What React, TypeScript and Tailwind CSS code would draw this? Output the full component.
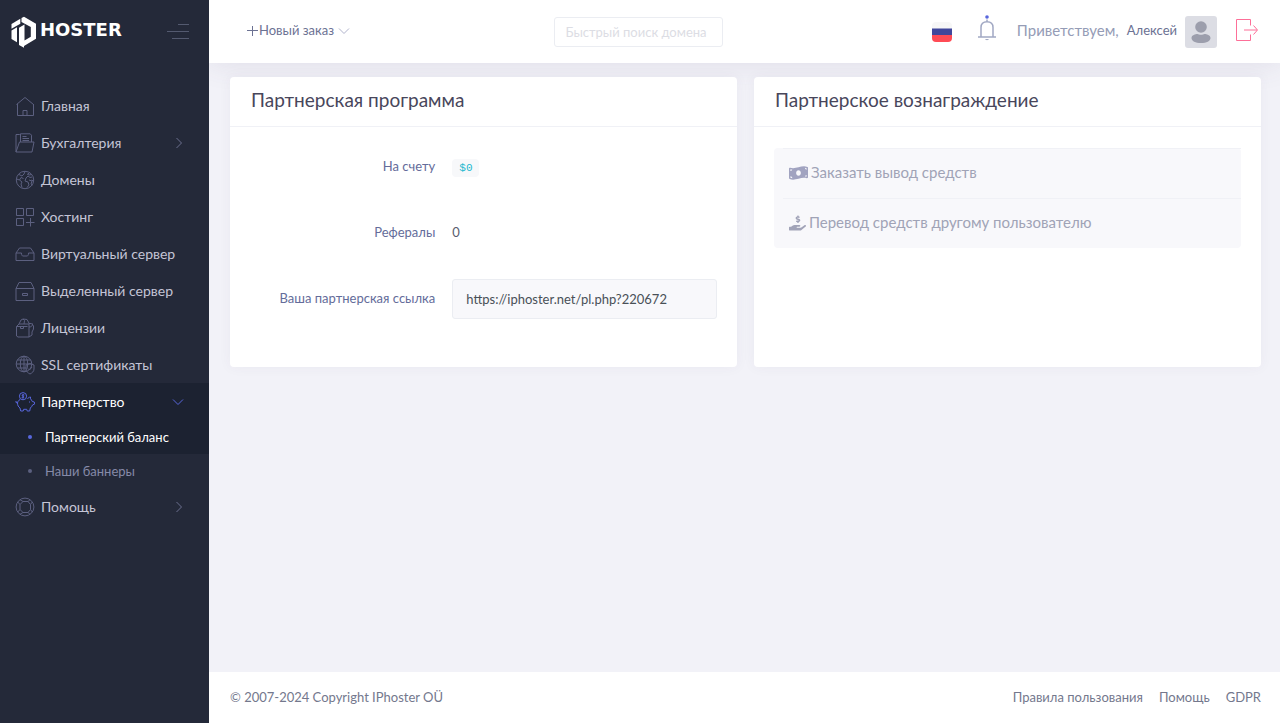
import type { ReactNode } from "react";
import clsx from "clsx";
import { FaHandHoldingUsd, FaMoneyBillWave } from "react-icons/fa";

type IconProps = { children: ReactNode; className?: string };

function LineIcon({ children, className }: IconProps) {
  return (
    <svg
      viewBox="0 0 20 20"
      className={clsx("h-5 w-5 shrink-0", className)}
      fill="none"
      stroke="currentColor"
      strokeWidth="1"
      strokeLinejoin="round"
      aria-hidden="true"
    >
      {children}
    </svg>
  );
}

const icons = {
  home: (
    <>
      <path d="M1.500 8.500 10 1.500l8.500 7" />
      <path d="M2.500 8v11.500h16V8" />
      <path d="M8 19.500v-5h4v5" />
    </>
  ),
  folder: (
    <>
      <path d="M1 19V1.500h3.500L6 3" />
      <path d="M5.500 9V.8h9.700l1.300 1.400V9" />
      <path d="M7.500 3.500h4M7.500 5.500h6.500M7.500 7.500h6.500" />
      <path d="M1 19 4.500 9h14.500l-2 10z" />
    </>
  ),
  globe: (
    <>
      <circle cx="10" cy="10" r="8.700" />
      <path d="M4 4.500 7 6l2-2 1-2.500M1.500 9l3 1 2.500 2-1 2 1 3.500M4.500 10 6 7.500l2.500 1" />
      <path d="m12 4 2 1 2.500-.5M11 8l2-2 2 1.500 2-.5M11 8l-1 3 3 1 1 3-2 2.500M14 10l3 1-1 3 1.500 1M14.500 2.500 13 4M18.500 11l-2-1" />
    </>
  ),
  grid: (
    <>
      <path d="M1.500 1.500h7v7h-7zM11.500 1.500h7v7h-7zM1.500 11.500h7v7h-7z" />
      <path d="M15.500 11v8.500M11 15.500h8.500" />
    </>
  ),
  tray: (
    <>
      <path d="M1 9 4.500 4h11L19 9v7.500H1z" />
      <path d="M1 9h5.500c0 2 .5 3 1.500 3h4c1 0 1.500-1 1.500-3H19" />
    </>
  ),
  drawer: (
    <>
      <path d="M1 7.500 4 1.500h12l3 6v12H1z" />
      <path d="M1 7.500h18M7.500 12.500h5v2h-5z" />
    </>
  ),
  license: (
    <>
      <path d="M1.500 8.500 4 6h10v13H3l-1.500-1z" />
      <path d="M1.500 8.500h11M4 6l2-4 2-1 1.500 1.500L9 6M8 1l4 .5L14.500 6" />
      <path d="M14 5.500h2.500L18.500 8v3L17 14v3l-3 2M14 9c2 0 4-1 3.500-3.500" />
      <path d="M5.500 8.500v2h3v-2" />
    </>
  ),
  ssl: (
    <>
      <circle cx="9" cy="9" r="7.800" />
      <ellipse cx="9" cy="9" rx="3.700" ry="7.800" />
      <path d="M9 1.200v15.600M1.200 9h16M2.300 5h13.400M2.300 13H11" />
      <path d="m15 8.500 4 1.500v4c0 2.500-2 4-4 5-2-1-4-2.500-4-5v-4z" />
      <path d="m13 13.500 1.500 1.500 2.500-3" />
    </>
  ),
  piggy: (
    <>
      <circle cx="8" cy="4.200" r="3.600" />
      <path d="M9.300 3c-2.300-.8-2.800 1-1.300 1.300s1.200 1.800-1.300 1.200M8 2v4.700" />
      <path d="M5 7.500c-1.500 1-2.300 2-2.500 3.500L1 10.500V9M2.500 11c0 2.500 1 4 2.500 5l.7 3h2.500l.5-1.700h3l.5 1.700h2.500l.6-3c1-.7 1.700-1.700 2.200-3l2.200-1-.4-2-2-.5c-.5-1-1-2-1.800-2.700V5c-1.500.2-2.500.8-3 2" />
      <path d="M14.500 9.500v1" />
    </>
  ),
  lifebuoy: (
    <>
      <circle cx="10" cy="10" r="8.900" />
      <path d="M8 4.500h5l2.500 3v5l-2.500 3H8l-3-3v-5z" />
      <path d="m5 2.700 3 1.800M2.700 5 5 7.500M15 2.700l-2 1.800M17.300 5l-1.800 2.500M5 17.300l3-1.800M2.700 15 5 12.500M15 17.300l-2-1.800M17.300 15l-1.800-2.500" />
    </>
  ),
};

const menu: { label: string; icon: ReactNode; arrow?: boolean }[] = [
  { label: "Главная", icon: icons.home },
  { label: "Бухгалтерия", icon: icons.folder, arrow: true },
  { label: "Домены", icon: icons.globe },
  { label: "Хостинг", icon: icons.grid },
  { label: "Виртуальный сервер", icon: icons.tray },
  { label: "Выделенный сервер", icon: icons.drawer },
  { label: "Лицензии", icon: icons.license },
  { label: "SSL сертификаты", icon: icons.ssl },
];

function Chevron({ className }: { className?: string }) {
  return (
    <svg viewBox="0 0 12 12" className={clsx("h-3 w-3 shrink-0", className)} fill="none" stroke="currentColor" aria-hidden="true">
      <path d="m3.500 1 5 5-5 5" />
    </svg>
  );
}

function Logo() {
  return (
    <a href="#" className="flex items-center gap-[3px] text-white">
      <svg viewBox="0 0 26 32" className="h-8 w-[26px]" fill="currentColor" role="img" aria-label="IP">
        <path d="M.5 8 9.300 2.800V7.700L.5 12.700z" />
        <path d="M.5 14.500 6 11.300V26.300L.5 23z" />
        <path d="M10.500 2.100 13 .7l12 7v15L13 29.900v1.800L8 29V11.800l5.500-3.300v16l6.300-3.700V11L10.500 6z" />
      </svg>
      <span className="pb-1 font-['DejaVu_Sans',sans-serif] text-lg leading-6 font-bold">HOSTER</span>
    </a>
  );
}

function MenuItem({ label, icon, arrow }: { label: string; icon: ReactNode; arrow?: boolean }) {
  return (
    <li>
      <a href="#" className="flex h-[37px] items-center gap-[6px] pr-6 pl-[15px] text-[#c4c5d6]">
        <LineIcon className="text-[#5c6080]">{icon}</LineIcon>
        <span className="grow whitespace-nowrap">{label}</span>
        {arrow && <Chevron className="text-[#6c7090]" />}
      </a>
    </li>
  );
}

function Sidebar() {
  return (
    <aside className="relative z-10 w-[209px] shrink-0 bg-[#242939]">
      <div className="flex h-[63px] items-center justify-between pr-5 pl-[11px]">
        <Logo />
        <button type="button" aria-label="Меню" className="text-[#545a70]">
          <svg viewBox="0 0 22 16" className="h-4 w-[22px]" stroke="currentColor" fill="none">
            <path d="M11 .5h11M0 7.500h22M5 14.500h17" />
          </svg>
        </button>
      </div>
      <nav className="pt-6 text-sm leading-5">
        <ul>
          {menu.map((item) => (
            <MenuItem key={item.label} {...item} />
          ))}
          <li>
            <a href="#" className="flex h-[37px] items-center gap-[6px] bg-[#1c2231] pr-[25px] pl-[15px] text-white">
              <LineIcon className="text-[#5867dd]">{icons.piggy}</LineIcon>
              <span className="grow">Партнерство</span>
              <Chevron className="rotate-90 text-[#5867dd]" />
            </a>
            <ul className="text-[13px] leading-5">
              <li>
                <a href="#" className="flex h-[34px] items-center gap-[13px] bg-[#1c2231] pl-7 text-white">
                  <span className="h-1 w-1 rounded-full bg-[#5867dd]" />
                  Партнерский баланс
                </a>
              </li>
              <li>
                <a href="#" className="flex h-[34px] items-center gap-[13px] pl-7 text-[#868aa8]">
                  <span className="h-1 w-1 rounded-full bg-[#5c6080]" />
                  Наши баннеры
                </a>
              </li>
            </ul>
          </li>
          <MenuItem label="Помощь" icon={icons.lifebuoy} arrow />
        </ul>
      </nav>
    </aside>
  );
}

function Header() {
  return (
    <header className="flex h-[63px] items-center justify-between bg-white pr-[22px] pl-[38px] shadow-[0_0_30px_0_rgba(82,63,105,0.12)]">
      <button type="button" className="flex items-center pb-[2px] text-[13px] text-[#6c7293]">
        <svg viewBox="0 0 11 11" className="mr-px h-[11px] w-[11px]" stroke="currentColor" aria-hidden="true">
          <path d="M5.500 1v10M0 5.500h11" />
        </svg>
        Новый заказ
        <Chevron className="ml-1 rotate-90 text-[#b0b3cc]" />
      </button>

      <input
        type="text"
        aria-label="Быстрый поиск домена"
        placeholder="Быстрый поиск домена"
        className="h-[30px] w-[169px] rounded-[3px] border border-[#ebedf2] px-[10px] text-[13px] text-[#6c7293] placeholder:text-[#dcdde4]"
      />

      <div className="flex items-center pl-1">
        <button type="button" aria-label="Русский" className="mr-[26px]">
          <svg viewBox="0 0 20 20" className="h-5 w-5">
            <clipPath id="flag">
              <rect width="20" height="20" rx="4" />
            </clipPath>
            <g clipPath="url(#flag)">
              <path fill="#f7f7f7" d="M0 0h20v7H0z" />
              <path fill="#41479b" d="M0 6.500h20v7H0z" />
              <path fill="#ff4b55" d="M0 13h20v7H0z" />
            </g>
          </svg>
        </button>
        <button type="button" aria-label="Уведомления" className="mr-[21px] pb-2 text-[#a1a8c3]">
          <svg viewBox="0 0 18 26" className="h-[26px] w-[18px]" fill="none" stroke="currentColor" strokeWidth="1.500">
            <circle cx="9" cy="2" r="1.800" fill="#5867dd" stroke="none" />
            <path d="M0 22h18" />
            <path d="M3 22V12.500C3 8.500 5.500 6.700 9 6.700s6 1.800 6 5.800V22M9 4.500v2" />
            <path d="M7 24c.8 1.500 3.200 1.500 4 0z" fill="currentColor" stroke="none" />
          </svg>
        </button>
        <a href="#" className="mr-[19px] flex items-center text-[13px] text-[#6c7293]">
          <span className="mr-2 pb-[2px] text-[15px] text-[#959cb6]">Приветствуем,</span>
          <span className="mr-2 pb-[2px]">Алексей</span>
          <svg viewBox="0 0 32 32" className="h-8 w-8" aria-hidden="true">
            <rect width="32" height="32" rx="3" fill="#dcdde4" />
            <circle cx="16" cy="11" r="5.800" fill="#9c9eac" />
            <path d="M6.500 22c0-3 4-4 6-4 1.500 1 5.500 1 7 0 2 0 6 1 6 4 0 3-4 5-9.500 5s-9.500-2-9.500-5z" fill="#9c9eac" />
          </svg>
        </a>
        <button type="button" aria-label="Выход" className="pb-1 text-[#fd6f98]">
          <svg viewBox="0 0 22 22" className="h-[22px] w-[22px]" fill="none" stroke="currentColor">
            <path d="M14.500 6.500v-6H.5v21h14v-6M8 11h13M17.500 6.500 21.500 11l-4 4.500" />
          </svg>
        </button>
      </div>
    </header>
  );
}

function Card({ title, children }: { title: string; children: ReactNode }) {
  return (
    <section className="rounded-sm bg-white shadow-[0_0_13px_0_rgba(82,63,105,0.05)]">
      <h2 className="flex h-[50px] items-center border-b border-[#f0f1f6] px-[21px] pb-[2px] text-[19px] text-[#48465b]">{title}</h2>
      {children}
    </section>
  );
}

export default function App() {
  return (
    <div className="flex min-h-screen bg-[#f2f2f8] font-[Lato,sans-serif]">
      <Sidebar />
      <div className="flex min-w-0 grow flex-col">
        <Header />
        <main className="grid grow grid-cols-2 items-start gap-[17px] pt-[14px] pr-[19px] pl-[21px]">
          <Card title="Партнерская программа">
            <div className="flex h-60 flex-col gap-[26px] px-5 pt-5 text-[13px] text-[#646c9a]">
              <div className="grid h-10 grid-cols-[7fr_10fr] items-center gap-[17px]">
                <span className="text-right">На счету</span>
                <span>
                  <code className="rounded-sm bg-[#f7f8fa] px-[7px] py-[3px] font-['Liberation_Mono',monospace] text-[11px] text-[#22b9cf]">
                    $0
                  </code>
                </span>
              </div>
              <div className="grid h-10 grid-cols-[7fr_10fr] items-center gap-[17px]">
                <span className="text-right">Рефералы</span>
                <span className="text-[#595d6e]">0</span>
              </div>
              <div className="grid h-10 grid-cols-[7fr_10fr] items-center gap-[17px]">
                <label htmlFor="ref-link" className="text-right">
                  Ваша партнерская ссылка
                </label>
                <input
                  id="ref-link"
                  type="text"
                  readOnly
                  defaultValue="https://iphoster.net/pl.php?220672"
                  className="h-10 w-full min-w-0 rounded-[3px] border border-[#ebedf2] bg-[#f8f8fb] px-[13px] text-[#495057]"
                />
              </div>
            </div>
          </Card>

          <Card title="Партнерское вознаграждение">
            <div className="h-60 px-5 pt-[21px]">
              <ul className="rounded-sm bg-[#f8f8fb] pl-[9px] text-[15px] text-[#a0a3b6]">
                <li className="border-t border-[#f0f1f6]">
                  <a href="#" className="flex h-[49px] items-center gap-[3px] pb-[2px] pl-[6px]">
                    <FaMoneyBillWave className="h-5 w-[19px] text-[#a1a3c0]" />
                    Заказать вывод средств
                  </a>
                </li>
                <li className="border-t border-[#f0f1f6]">
                  <a href="#" className="flex h-[49px] items-center gap-[3px] pb-[2px] pl-[6px]">
                    <FaHandHoldingUsd className="h-5 w-[17px] text-[#a1a3b8]" />
                    Перевод средств другому пользователю
                  </a>
                </li>
              </ul>
            </div>
          </Card>
        </main>
        <footer className="flex h-[51px] items-center justify-between bg-white pr-[19px] pl-[21px] text-[13px] text-[#74788d]">
          <span>© 2007-2024 Copyright IPhoster OÜ</span>
          <nav className="flex gap-4">
            <a href="#">Правила пользования</a>
            <a href="#">Помощь</a>
            <a href="#">GDPR</a>
          </nav>
        </footer>
      </div>
    </div>
  );
}
